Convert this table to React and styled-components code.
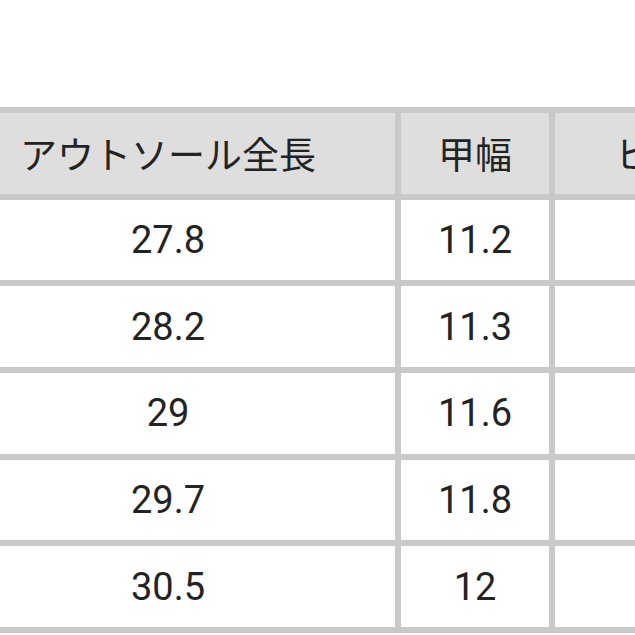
import React from "react"
import styled, { createGlobalStyle } from "styled-components"

const GlobalStyle = createGlobalStyle`
  html, body {
    margin: 0;
    padding: 0;
    background: #fff;
    overflow: hidden;
  }
`

const headers = ["アウトソール全長", "甲幅", "ヒール"]

const rows = [
  ["27.8", "11.2", ""],
  ["28.2", "11.3", ""],
  ["29", "11.6", ""],
  ["29.7", "11.8", ""],
  ["30.5", "12", ""],
]

const App = () => {
  return (
    <Page>
      <GlobalStyle />
      <SizeTable>
        {headers.map((h) => (
          <Cell key={h} head>
            {h}
          </Cell>
        ))}
        {rows.map((row, i) =>
          row.map((v, j) => <Cell key={i + "-" + j}>{v}</Cell>)
        )}
      </SizeTable>
    </Page>
  )
}

const Page = styled.div`
  width: 635px;
  height: 635px;
  overflow: hidden;
  padding-top: 107px;
  box-sizing: border-box;
`

const SizeTable = styled.div`
  display: grid;
  grid-template-columns: 454px 148px 230px;
  grid-auto-rows: 80.7px;
  gap: 6px;
  padding: 6px 0;
  margin-left: -59px;
  width: max-content;
  background: #c9c9c9;
`

const Cell = styled.div`
  display: flex;
  align-items: center;
  justify-content: center;
  background: ${(p) => (p.head ? "#dedede" : "#ffffff")};
  color: #232323;
  font-family: Roboto, "Noto Sans CJK JP", sans-serif;
  font-size: ${(p) => (p.head ? "37px" : "38px")};
  white-space: nowrap;
`

export default App
